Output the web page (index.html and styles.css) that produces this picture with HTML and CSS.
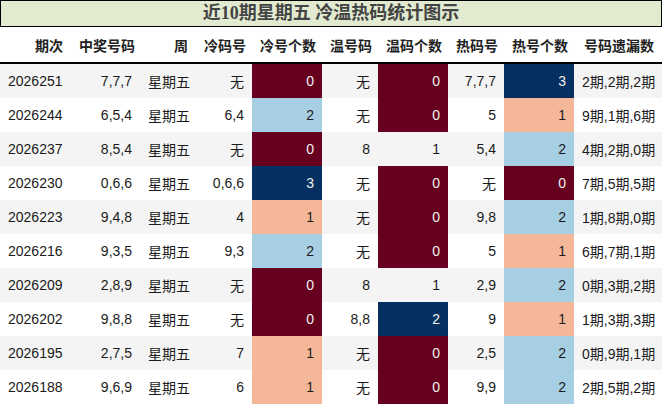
FILE: index.html
```html
<!DOCTYPE html>
<html lang="zh">
<head>
<meta charset="utf-8">
<link rel="stylesheet" href="styles.css">
</head>
<body>
<div class="title">近10期星期五 冷温热码统计图示</div>
<table class="grid">
<colgroup>
<col class="w71"><col class="w69"><col class="w56"><col class="w56"><col class="w70"><col class="w56"><col class="w70"><col class="w56"><col class="w70"><col class="w88">
</colgroup>
<thead>
<tr><th>期次</th><th>中奖号码</th><th>周</th><th>冷码号</th><th>冷号个数</th><th>温号码</th><th>温码个数</th><th>热码号</th><th>热号个数</th><th>号码遗漏数</th></tr>
</thead>
<tbody>
<tr><td class="l">2026251</td><td>7,7,7</td><td class="l">星期五</td><td>无</td><td class="c0">0</td><td>无</td><td class="c0">0</td><td>7,7,7</td><td class="c3">3</td><td>2期,2期,2期</td></tr>
<tr><td class="l">2026244</td><td>6,5,4</td><td class="l">星期五</td><td>6,4</td><td class="c2">2</td><td>无</td><td class="c0">0</td><td>5</td><td class="c1">1</td><td>9期,1期,6期</td></tr>
<tr><td class="l">2026237</td><td>8,5,4</td><td class="l">星期五</td><td>无</td><td class="c0">0</td><td>8</td><td>1</td><td>5,4</td><td class="c2">2</td><td>4期,2期,0期</td></tr>
<tr><td class="l">2026230</td><td>0,6,6</td><td class="l">星期五</td><td>0,6,6</td><td class="c3">3</td><td>无</td><td class="c0">0</td><td>无</td><td class="c0">0</td><td>7期,5期,5期</td></tr>
<tr><td class="l">2026223</td><td>9,4,8</td><td class="l">星期五</td><td>4</td><td class="c1">1</td><td>无</td><td class="c0">0</td><td>9,8</td><td class="c2">2</td><td>1期,8期,0期</td></tr>
<tr><td class="l">2026216</td><td>9,3,5</td><td class="l">星期五</td><td>9,3</td><td class="c2">2</td><td>无</td><td class="c0">0</td><td>5</td><td class="c1">1</td><td>6期,7期,1期</td></tr>
<tr><td class="l">2026209</td><td>2,8,9</td><td class="l">星期五</td><td>无</td><td class="c0">0</td><td>8</td><td>1</td><td>2,9</td><td class="c2">2</td><td>0期,3期,2期</td></tr>
<tr><td class="l">2026202</td><td>9,8,8</td><td class="l">星期五</td><td>无</td><td class="c0">0</td><td>8,8</td><td class="c3">2</td><td>9</td><td class="c1">1</td><td>1期,3期,3期</td></tr>
<tr><td class="l">2026195</td><td>2,7,5</td><td class="l">星期五</td><td>7</td><td class="c1">1</td><td>无</td><td class="c0">0</td><td>2,5</td><td class="c2">2</td><td>0期,9期,1期</td></tr>
<tr><td class="l">2026188</td><td>9,6,9</td><td class="l">星期五</td><td>6</td><td class="c1">1</td><td>无</td><td class="c0">0</td><td>9,9</td><td class="c2">2</td><td>2期,5期,2期</td></tr>
</tbody>
</table>
</body>
</html>
```
FILE: styles.css
```css
html, body {
  margin: 0;
  padding: 0;
  background: #ffffff;
}
body {
  width: 662px;
  font-family: "Liberation Sans", "Noto Sans CJK SC", sans-serif;
  font-size: 14px;
  color: #1a1a1a;
}
.title {
  box-sizing: border-box;
  height: 27px;
  border: 1px solid #000;
  background: #e2ebd0;
  color: #444;
  font-family: "Liberation Serif", "Noto Sans CJK SC", serif;
  font-weight: bold;
  font-size: 18px;
  line-height: 25px;
  text-align: center;
}
.grid {
  width: 662px;
  border-collapse: collapse;
  table-layout: fixed;
}
.w71 { width: 71px; }
.w69 { width: 69px; }
.w56 { width: 56px; }
.w70 { width: 70px; }
.w88 { width: 88px; }
.grid th {
  height: 35px;
  padding: 0 8px;
  text-align: right;
  font-weight: bold;
  color: #222;
  border-bottom: 2px solid #000;
  white-space: nowrap;
}
.grid td {
  height: 34px;
  padding: 0 8px;
  text-align: right;
  white-space: nowrap;
}
.grid tbody tr:nth-child(odd) {
  background: #f4f4f4;
}
.grid td.l {
  text-align: left;
}
.c0 {
  background: #67001f;
  color: #f0f0f0;
}
.c3 {
  background: #053061;
  color: #f0f0f0;
}
.c2 {
  background: #a6cfe4;
}
.c1 {
  background: #f4b899;
}
```
